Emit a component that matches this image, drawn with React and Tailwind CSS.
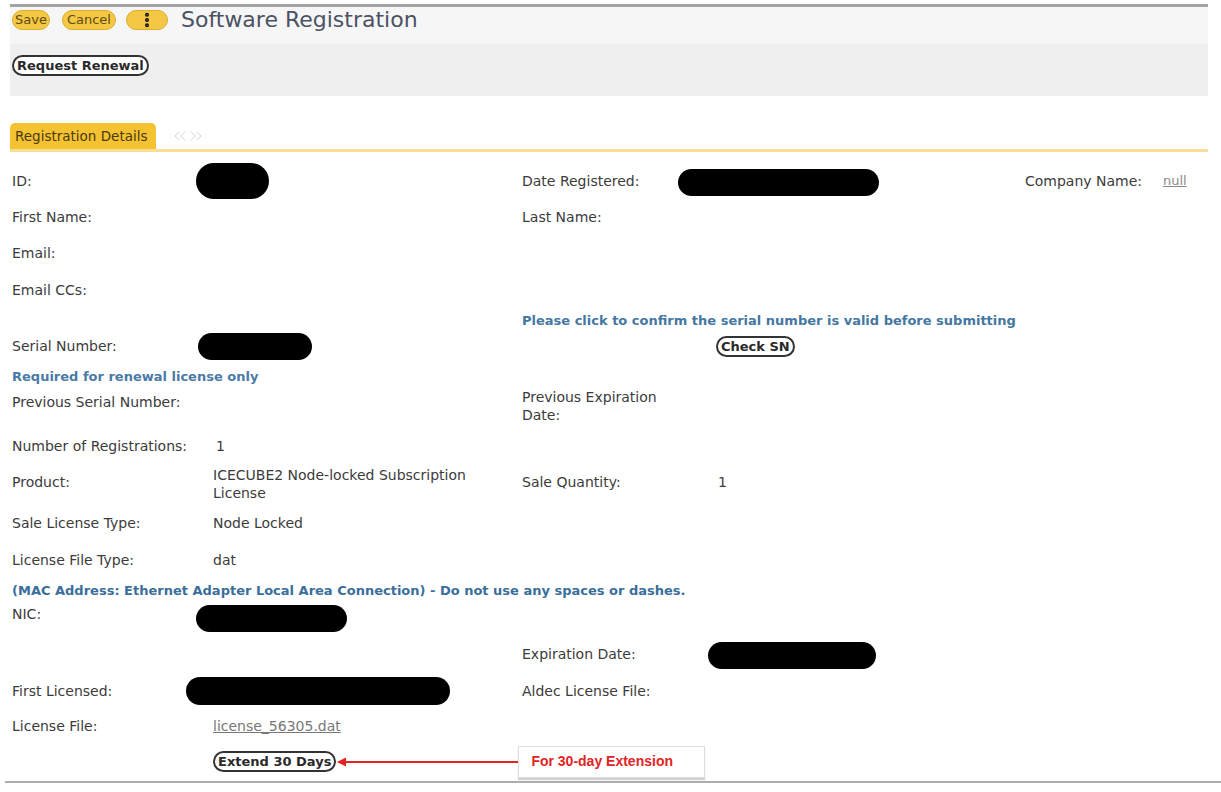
import React from 'react';
import { ChevronsLeft, ChevronsRight, EllipsisVertical } from 'lucide-react';

// column widths of the details table
const A = 'w-[203px] shrink-0 pl-[2px]';
const B = 'w-[309px] shrink-0';
const C = 'w-[194px] shrink-0';
const D = 'w-[309px] shrink-0';
const E = 'w-[138px] shrink-0';

function Blob({ className }) {
  return <div className={'rounded-full bg-black ' + className} />;
}

function PillButton({ children, className = '' }) {
  return (
    <button
      className={
        'flex h-[21px] items-center whitespace-nowrap rounded-full border-2 border-[#333] bg-white px-[3px] text-[13px] font-bold leading-none text-[#2a2a2a] ' +
        className
      }
    >
      {children}
    </button>
  );
}

export default function App() {
  return (
    <div className="min-h-screen bg-white pt-[4px] font-['DejaVu_Sans',Verdana,sans-serif] text-[14px] text-[#3b3b3b]">
      <div className="ml-[10px] w-[1198px]">
        {/* Toolbar */}
        <div className="flex h-[40px] items-start border-t-[3px] border-[#a3a3a3] bg-[#f6f6f6] pl-[2px] pt-[3px]">
          <button className="h-[20px] rounded-[10px] border border-[#dcae2e] bg-[#f4c744] px-[2px] text-[13px] leading-[18px] text-[#5e4b12]">
            Save
          </button>
          <button className="ml-[12px] h-[20px] rounded-[10px] border border-[#dcae2e] bg-[#f4c744] px-[4px] text-[13px] leading-[18px] text-[#5e4b12]">
            Cancel
          </button>
          <button className="ml-[10px] flex h-[20px] w-[42px] items-center justify-center rounded-[10px] border border-[#dcae2e] bg-[#f4c744]">
            <EllipsisVertical size={18} strokeWidth={3.4} color="#111" />
          </button>
          <h1 className="ml-[13px] -mt-[3px] text-[22px] leading-[26px] text-[#4b5263]">Software Registration</h1>
        </div>
        <div className="h-[52px] bg-[#efefef] pl-[2px] pt-[11px]">
          <PillButton>Request Renewal</PillButton>
        </div>

        {/* Tabs */}
        <div className="mt-[27px] flex h-[26px] items-center">
          <div className="flex h-[26px] w-[146px] items-center rounded-t-[5px] bg-[#f5c232] pl-[5px] text-[13.5px] text-[#4a3a0c]">
            Registration Details
          </div>
          <div className="ml-[14px] flex items-center text-[#d0d0d0]">
            <ChevronsLeft size={20} strokeWidth={1.1} />
            <ChevronsRight size={20} strokeWidth={1.1} className="-ml-[4px]" />
          </div>
        </div>
        <div className="h-[3px] bg-[#f9de95]" />

        {/* Details */}
        <div className="mt-[11px] flex h-[36px] items-center">
          <div className={A}>ID:</div>
          <div className={B}>
            <Blob className="-ml-[17px] h-[36px] w-[73px]" />
          </div>
          <div className={C}>Date Registered:</div>
          <div className={D}>
            <Blob className="-ml-[38px] mt-[3px] h-[27px] w-[201px]" />
          </div>
          <div className={E}>Company Name:</div>
          <div className="text-[13px] text-[#8a8a8a] underline">null</div>
        </div>
        <div className="flex h-[36px] items-center">
          <div className={A}>First Name:</div>
          <div className={B} />
          <div className={C}>Last Name:</div>
        </div>
        <div className="flex h-[36px] items-center">
          <div className={A}>Email:</div>
        </div>
        <div className="flex h-[38px] items-center">
          <div className={A}>Email CCs:</div>
        </div>
        <div className="flex h-[24px] items-center">
          <div className={A} />
          <div className={B} />
          <div className="text-[13px] font-bold text-[#4577a3]">
            Please click to confirm the serial number is valid before submitting
          </div>
        </div>
        <div className="flex h-[26px] items-center">
          <div className={A}>Serial Number:</div>
          <div className={B}>
            <Blob className="-ml-[15px] h-[27px] w-[114px]" />
          </div>
          <div className={C} />
          <div className={D}>
            <PillButton>Check SN</PillButton>
          </div>
        </div>
        <div className="mt-[7px] flex h-[22px] items-center">
          <div className="pl-[2px] text-[13px] font-bold text-[#4a7aa6]">Required for renewal license only</div>
        </div>
        <div className="flex h-[36px] items-center">
          <div className={A + ' -mt-[8px]'}>Previous Serial Number:</div>
          <div className={B} />
          <div className={C + ' leading-[18px]'}>
            Previous Expiration
            <br />
            Date:
          </div>
        </div>
        <div className="mt-[4px] flex h-[36px] items-center">
          <div className={A}>Number of Registrations:</div>
          <div className={B + ' pl-[3px]'}>1</div>
        </div>
        <div className="flex h-[40px] items-center">
          <div className={A + ' -mt-[4px]'}>Product:</div>
          <div className={B + ' leading-[18px]'}>
            ICECUBE2 Node-locked Subscription
            <br />
            License
          </div>
          <div className={C + ' -mt-[4px]'}>Sale Quantity:</div>
          <div className={D + ' -mt-[4px] pl-[2px]'}>1</div>
        </div>
        <div className="flex h-[38px] items-center">
          <div className={A}>Sale License Type:</div>
          <div className={B}>Node Locked</div>
        </div>
        <div className="flex h-[36px] items-center">
          <div className={A}>License File Type:</div>
          <div className={B}>dat</div>
        </div>
        <div className="mt-[2px] flex h-[22px] items-center">
          <div className="pl-[2px] text-[13px] font-bold text-[#3a6f9c]">
            (MAC Address: Ethernet Adapter Local Area Connection) - Do not use any spaces or dashes.
          </div>
        </div>
        <div className="flex h-[28px] items-center">
          <div className={A + ' -mt-[4px]'}>NIC:</div>
          <div className={B}>
            <Blob className="-ml-[17px] mt-[4px] h-[27px] w-[151px]" />
          </div>
        </div>
        <div className="mt-[6px] flex h-[36px] items-center">
          <div className={A} />
          <div className={B} />
          <div className={C}>Expiration Date:</div>
          <div className={D}>
            <Blob className="-ml-[8px] mt-[3px] h-[27px] w-[168px]" />
          </div>
        </div>
        <div className="flex h-[38px] items-center">
          <div className={A}>First Licensed:</div>
          <div className={B}>
            <Blob className="-ml-[27px] h-[28px] w-[264px]" />
          </div>
          <div className={C}>Aldec License File:</div>
        </div>
        <div className="flex h-[32px] items-center">
          <div className={A}>License File:</div>
          <div className={B + ' text-[#777] underline'}>license_56305.dat</div>
        </div>
        <div className="flex h-[39px] items-center">
          <div className={A} />
          <PillButton>Extend 30 Days</PillButton>
          <svg width="182" height="12" viewBox="0 0 182 12" className="shrink-0">
            <line x1="8" y1="6" x2="182" y2="6" stroke="#e2231f" strokeWidth="2" />
            <path d="M1 6 L10 1.5 L10 10.5 Z" fill="#e2231f" />
          </svg>
          <div className="flex h-[32px] w-[187px] items-center border border-[#dedede] bg-white pl-[12px] font-['Liberation_Sans',Arial,sans-serif] text-[14px] font-bold text-[#e2231f] shadow-[0_2px_1px_rgba(0,0,0,0.18)]">
            For 30-day Extension
          </div>
        </div>
      </div>
      <div className="ml-[5px] h-[2px] bg-[#adadad]" />
    </div>
  );
}
